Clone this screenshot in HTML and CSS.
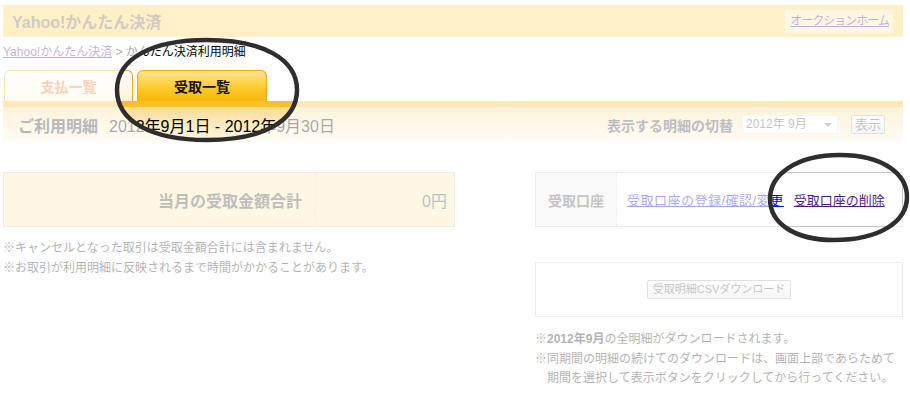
FILE: index.html
```html
<!DOCTYPE html>
<html lang="ja">
<head>
    <meta charset="UTF-8">
    <meta name="viewport" content="width=device-width, initial-scale=1.0">
    <title>かんたん決済利用明細</title>
    <link rel="stylesheet" href="styles.css">
</head>
<body>
    <div class="page">
        <div class="header">
            <span class="logo">Yahoo!かんたん決済</span>
            <span class="home"><a href="#" class="visited">オークションホーム</a></span>
        </div>

        <div class="crumbs"><a href="#" class="visited">Yahoo!かんたん決済</a> &gt; かんたん決済利用明細</div>

        <div class="tabs">
            <a href="#" class="tab">支払一覧</a>
            <a href="#" class="tab active">受取一覧</a>
        </div>

        <div class="period">
            <div class="period-title">
                <h2>ご利用明細</h2>
                <span class="range">2012年9月1日 - 2012年9月30日</span>
            </div>
            <div class="switch">
                <span class="switch-label">表示する明細の切替</span>
                <div class="select">2012年 9月<span class="caret"></span></div>
                <button class="btn">表示</button>
            </div>
        </div>

        <div class="content">
            <div class="left">
                <div class="total">
                    <div class="total-label">当月の受取金額合計</div>
                    <div class="total-value">0円</div>
                </div>
                <ul class="notes">
                    <li>※キャンセルとなった取引は受取金額合計には含まれません。</li>
                    <li>※お取引が利用明細に反映されるまで時間がかかることがあります。</li>
                </ul>
            </div>

            <div class="right">
                <div class="account">
                    <div class="account-label">受取口座</div>
                    <div class="account-links">
                        <a href="#" class="edit">受取口座の登録/確認/変更</a>
                        <a href="#" class="visited">受取口座の削除</a>
                    </div>
                </div>
                <div class="csv">
                    <button class="btn csv-btn">受取明細CSVダウンロード</button>
                </div>
                <ul class="notes">
                    <li>※<b>2012年9月</b>の全明細がダウンロードされます。</li>
                    <li>※同期間の明細の続けてのダウンロードは、画面上部であらためて期間を選択して表示ボタンをクリックしてから行ってください。</li>
                </ul>
            </div>
        </div>
    </div>

    <!-- ペンで囲んだ部分以外を薄くする -->
    <svg class="marks" width="910" height="394" viewBox="0 0 910 394">
        <defs>
            <mask id="holes">
                <rect width="910" height="394" fill="#fff"/>
                <path d="M117,90 C117,59 151,40 207,40 C263,40 297,59 297,90 C297,121 263,140 207,140 C151,140 117,121 117,90Z" fill="#000"/>
                <path d="M770,199 C770,174 797,155 840,155 C883,155 907,174 907,197 C907,222 879,240 834,240 C794,240 770,223 770,199Z" fill="#000"/>
            </mask>
        </defs>
        <rect width="910" height="394" fill="#fff" fill-opacity="0.65" mask="url(#holes)"/>
        <g fill="none" stroke="#2e2e2e" stroke-width="4.5">
            <path d="M117,90 C117,59 151,40 207,40 C263,40 297,59 297,90 C297,121 263,140 207,140 C151,140 117,121 117,90Z"/>
            <path d="M770,199 C770,174 797,155 840,155 C883,155 907,174 907,197 C907,222 879,240 834,240 C794,240 770,223 770,199Z"/>
        </g>
    </svg>
</body>
</html>
```

FILE: styles.css
```css
* {
    box-sizing: border-box;
}
body {
    margin: 0;
    font-family: "Liberation Sans", "Noto Sans CJK JP", sans-serif;
    font-size: 12px;
    color: #222;
    background: #fff;
    position: relative;
}
a {
    color: #00f;
}
a.visited {
    color: #551a8b;
}
.page {
    width: 900px;
    margin-left: 3px;
    padding-top: 5px;
}

/* ヘッダー */
.header {
    height: 32px;
    background: #ffd462;
    display: flex;
    align-items: center;
    justify-content: space-between;
    padding: 0 10px 0 9px;
}
.logo {
    font-size: 16px;
    font-weight: bold;
    color: #756b4d;
}
.home {
    background: #ffe9b0;
    height: 23px;
    line-height: 23px;
    padding: 0 4px 0 5px;
    font-size: 12px;
    letter-spacing: -1px;
}

.crumbs {
    margin-top: 7px;
    line-height: 16px;
    font-size: 12px;
    color: #000;
}

/* タブ */
.tabs {
    display: flex;
    gap: 4px;
    margin: 10px 0 0 1px;
}
.tab {
    height: 31px;
    width: 129px;
    border: 1px solid #faa61d;
    border-bottom: none;
    border-radius: 6px 6px 0 0;
    display: flex;
    align-items: center;
    justify-content: center;
    font-size: 14px;
    font-weight: bold;
    text-decoration: none;
    color: #f87a2c;
    background: linear-gradient(#fff, #fff4dc);
}
.tab.active {
    width: 130px;
    color: #111;
    border-color: #f5a90f;
    background: linear-gradient(#ffe68f, #fdc829 60%, #fbb90a);
}

/* 期間 */
.period {
    height: 41px;
    border-top: 6px solid #fac02c;
    background: linear-gradient(#fadc98, #fff8e8);
    display: flex;
    align-items: center;
    justify-content: space-between;
    padding: 0 18px 0 15px;
}
.period-title {
    display: flex;
    align-items: center;
}
.period h2 {
    margin: 0;
    font-size: 16px;
    color: #333;
}
.range {
    margin-left: 11px;
    font-size: 16px;
    color: #000;
}
.switch {
    display: flex;
    align-items: center;
}
.switch-label {
    font-size: 14px;
    font-weight: bold;
    color: #444;
}
.select {
    width: 96px;
    height: 19px;
    margin-left: 9px;
    border: 1px solid #e6e6e6;
    background: #fff;
    color: #555;
    font-size: 12px;
    line-height: 17px;
    padding-left: 3px;
    position: relative;
}
.caret {
    position: absolute;
    right: 5px;
    top: 7px;
    border: 4px solid transparent;
    border-top: 4px solid #777;
    border-bottom: none;
}
.btn {
    font-family: inherit;
    height: 19px;
    padding: 0 3px;
    border: 1px solid #a8a8a8;
    border-radius: 2px;
    background: linear-gradient(#fafafa, #e6e6e6);
    color: #555;
    font-size: 13px;
    line-height: 17px;
}
.switch .btn {
    margin-left: 13px;
    width: 34px;
}

/* 本文 */
.content {
    display: flex;
    justify-content: space-between;
    margin-top: 30px;
}
.left {
    width: 452px;
}
.right {
    width: 368px;
}
.total {
    height: 55px;
    border: 1px solid #c6c6c6;
    background: #ffe8b0;
    display: flex;
    align-items: center;
}
.total-label {
    width: 312px;
    height: 100%;
    display: flex;
    align-items: center;
    justify-content: flex-end;
    padding-right: 13px;
    border-right: 1px dashed #d8d0b8;
    font-size: 16px;
    font-weight: bold;
    color: #444;
}
.total-value {
    flex: 1;
    text-align: right;
    padding-right: 7px;
    font-size: 16px;
    color: #444;
}
.notes {
    list-style: none;
    margin: 11px 0 0;
    padding: 0;
    font-size: 12px;
    line-height: 20px;
    color: #222;
}
.notes li {
    padding-left: 12px;
    text-indent: -12px;
}
.right .notes {
    margin-top: 13px;
    line-height: 19.5px;
}

.account {
    height: 55px;
    border: 1px solid #c6c6c6;
    display: flex;
}
.account-label {
    width: 81px;
    background: #ededed;
    border-right: 1px dashed #d0d0d0;
    display: flex;
    align-items: center;
    justify-content: center;
    font-size: 14px;
    font-weight: bold;
    color: #555;
}
.account-links {
    display: flex;
    align-items: center;
    gap: 10px;
    padding-left: 10px;
    font-size: 13px;
}
.account-links .edit {
    letter-spacing: 0.5px;
}
.csv {
    height: 55px;
    margin-top: 35px;
    border: 1px solid #c6c6c6;
    display: flex;
    align-items: center;
    justify-content: center;
}
.csv-btn {
    width: 144px;
    font-size: 11px;
}

/* 囲み線 */
.marks {
    position: absolute;
    top: 0;
    left: 0;
}
```
